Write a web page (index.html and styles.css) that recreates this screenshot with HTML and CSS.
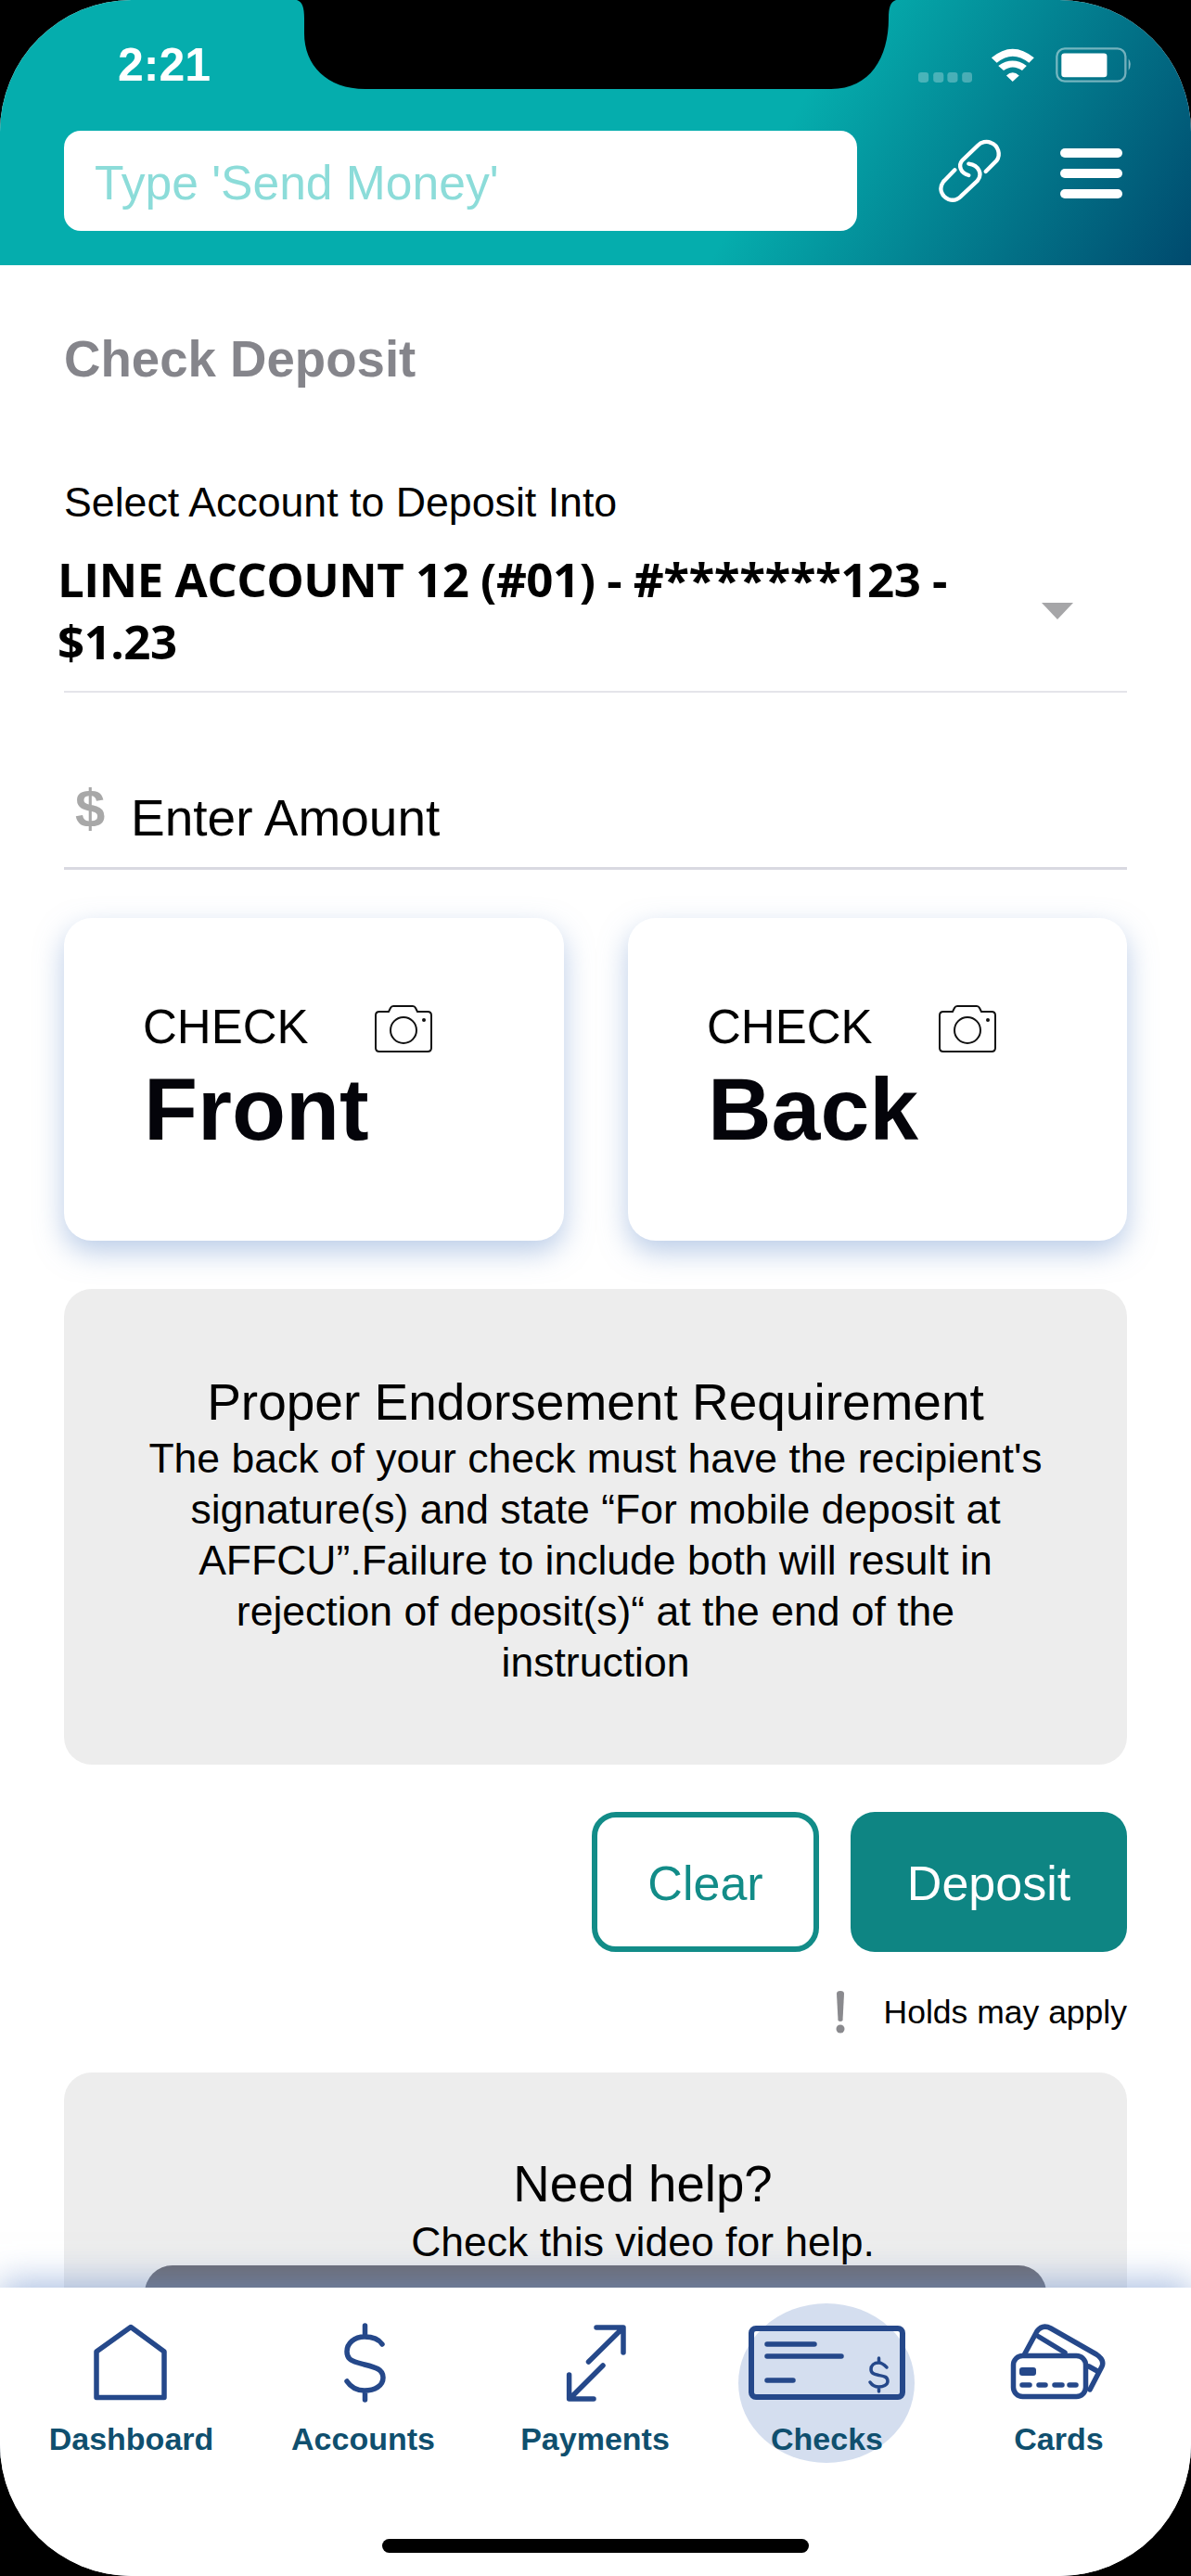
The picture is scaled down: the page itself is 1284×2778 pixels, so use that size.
FILE: index.html
```html
<!DOCTYPE html>
<html lang="en">
<head>
<meta charset="utf-8">
<title>Check Deposit</title>
<link rel="stylesheet" href="styles.css">
</head>
<body>
<div class="screen">
  <svg class="notch" viewBox="0 0 646 96"><path d="M0 0C6 2 8 8 8 20V36C8 70 32 96 74 96H576C618 96 638 62 638 20C638 8 640 2 646 0Z"/></svg>
  <header class="header">
    <div class="status">
      <span class="time">2:21</span>
      <div class="status-icons">
        <svg class="signal" viewBox="27 113 172 32"><g fill="#fff" fill-opacity=".28"><rect x="27" y="113" width="33" height="32" rx="9"/><rect x="75" y="113" width="33" height="32" rx="9"/><rect x="120" y="113" width="33" height="32" rx="9"/><rect x="167" y="113" width="32" height="32" rx="9"/></g></svg>
        <svg class="wifi" viewBox="262 33 144 112"><g fill="#fff"><path d="M262 65Q333 5 405 65L388 82Q333 38 280 82Z"/><path d="M285 92Q333 58 380 92L365 108Q333 85 303 108Z"/><path d="M312 125Q333 105 355 125L333 145Z"/></g></svg>
        <svg class="battery" viewBox="466 33 250 114"><rect x="470" y="37" width="223" height="106" rx="26" fill="none" stroke="#fff" stroke-opacity=".45" stroke-width="7"/><rect x="485" y="52" width="148" height="78" rx="10" fill="#fff"/><path d="M703 70Q716 88 703 108Z" fill="#fff" fill-opacity=".5"/></svg>
      </div>
    </div>
    <div class="search-row">
      <div class="search">Type 'Send Money'</div>
      <svg class="link" viewBox="90 330 210 204"><g fill="none" stroke="#fff" stroke-width="13" stroke-linecap="round"><path d="M245 435L280 400C295 380 285 350 262 342C248 335 230 340 220 350L170 398C155 415 163 440 190 447"/><path d="M145 430L108 468C92 490 102 515 125 525C140 530 155 525 165 515L218 465C235 445 225 415 190 410"/></g></svg>
      <div class="menu"><span></span><span></span><span></span></div>
    </div>
  </header>

  <main class="main">
    <h1 class="title">Check Deposit</h1>
    <div class="select-label">Select Account to Deposit Into</div>
    <div class="select">
      <div class="select-value">LINE ACCOUNT 12 (#01) - #*******123 - $1.23</div>
      <div class="select-arrow"></div>
    </div>
    <div class="amount">
      <span class="amount-sign">$</span>
      <span class="amount-text">Enter Amount</span>
    </div>
    <div class="capture-row">
      <div class="capture">
        <div class="capture-top">
          <span class="capture-label">CHECK</span>
          <svg class="camera" viewBox="0 0 62 52"><g fill="none" stroke="#111" stroke-width="2"><path d="M5 8H15L17 4Q18 2 20 2H41Q43 2 44 4L46 8H57Q61 8 61 12V47Q61 51 57 51H5Q1 51 1 47V12Q1 8 5 8Z"/><circle cx="31" cy="28" r="14"/></g><circle cx="53" cy="17" r="2" fill="#111"/></svg>
        </div>
        <div class="capture-name">Front</div>
      </div>
      <div class="capture">
        <div class="capture-top">
          <span class="capture-label">CHECK</span>
          <svg class="camera" viewBox="0 0 62 52"><g fill="none" stroke="#111" stroke-width="2"><path d="M5 8H15L17 4Q18 2 20 2H41Q43 2 44 4L46 8H57Q61 8 61 12V47Q61 51 57 51H5Q1 51 1 47V12Q1 8 5 8Z"/><circle cx="31" cy="28" r="14"/></g><circle cx="53" cy="17" r="2" fill="#111"/></svg>
        </div>
        <div class="capture-name">Back</div>
      </div>
    </div>
    <section class="notice">
      <h2 class="notice-title">Proper Endorsement Requirement</h2>
      <p class="notice-body">The back of your check must have the recipient's<br>signature(s) and state “For mobile deposit at<br>AFFCU”.Failure to include both will result in<br>rejection of deposit(s)“ at the end of the<br>instruction</p>
    </section>
    <div class="actions">
      <button class="btn btn-clear">Clear</button>
      <button class="btn btn-deposit">Deposit</button>
    </div>
    <div class="holds">
      <svg class="bang" viewBox="0 0 10 46"><path d="M1 3Q1 0 5 0Q9 0 9 3L7.5 32Q5 34 2.500 32Z" fill="#8a8a8e"/><circle cx="5" cy="41" r="4.500" fill="#8a8a8e"/></svg>
      <span>Holds may apply</span>
    </div>
    <section class="help">
      <h2 class="help-title">Need help?</h2>
      <p class="help-body">Check this video for help.</p>
      <div class="help-video"></div>
    </section>
  </main>

  <nav class="tabbar">
    <div class="tab">
      <svg class="tab-icon" viewBox="0 0 180 100"><path d="M53 85.500V36L90 9.500L126 36V85.500Z"/></svg>
      <span class="tab-label">Dashboard</span>
    </div>
    <div class="tab">
      <svg class="tab-icon" viewBox="0 0 180 100"><path d="M92.500 8V19M92.500 79V88M111 28C107 22 100 20 92 20C81 20 73 27 73 36C73 46 81 47 92 50C104 53 112 55 112 64C112 73 103 78 92 78C84 78 77 74 73 68"/></svg>
      <span class="tab-label">Accounts</span>
    </div>
    <div class="tab">
      <svg class="tab-icon" viewBox="0 0 180 100"><path d="M92 10H121V37M83.500 47L120 11M99 51L64 86M62.600 61V87H89"/></svg>
      <span class="tab-label">Payments</span>
    </div>
    <div class="tab tab-active">
      <span class="tab-glow"></span>
      <svg class="tab-icon" viewBox="0 0 180 100"><rect x="9" y="11" width="163" height="74" rx="5" stroke-width="6"/><path d="M26 28H77M26 41H106M26 67H54" stroke-width="5.500"/><path d="M146.500 43V48M146.500 74V79M155 53C152 50 150 48 146.500 48C141 48 138 51 138 55C138 60 142 60.500 146.500 61.500C152 62.500 156 63 156 68C156 72 151 74 146.500 74C142 74 139 72 137 69" stroke-width="3.500"/></svg>
      <span class="tab-label">Checks</span>
    </div>
    <div class="tab">
      <svg class="tab-icon" viewBox="1 0 180 100"><path d="M55 38L68 14Q74 6 83 11L132 39Q141 45 138 52L125 77M70 20L98 37" /><path d="M124 52L133 57" /><rect class="card-front" x="42.500" y="40.500" width="78" height="44" rx="10"/><rect class="card-chip" x="49" y="53" width="18" height="9" rx="3"/><path d="M52 72H60M70 72H77M87 72H95M103 72H110"/></svg>
      <span class="tab-label">Cards</span>
    </div>
    <div class="home-indicator"></div>
  </nav>
</div>
</body>
</html>
```

FILE: styles.css
```css
* { box-sizing: border-box; }
html, body { margin: 0; padding: 0; background: #000; }
body { font-family: "Liberation Sans", Arial, sans-serif; color: #000; }

.screen {
  position: relative;
  width: 1284px;
  height: 2778px;
  display: flex;
  flex-direction: column;
  overflow: hidden;
  background: #fff;
  border-radius: 142px;
}

.notch { position: absolute; left: 320px; top: 0; width: 646px; height: 96px; z-index: 5; fill: #000; }

.header {
  flex: none;
  height: 286px;
  background: linear-gradient(120deg, #05adad 0%, #05adad 64%, #004a6e 100%);
}
.status {
  height: 141px;
  display: flex;
  justify-content: space-between;
  align-items: flex-start;
  padding: 42px 73px 0 127px;
}
.time { font-size: 50px; font-weight: 700; line-height: 56px; color: #fff; }
.status-icons { display: flex; align-items: flex-start; padding-top: 10px; }
.signal { width: 58px; height: 11px; margin: 26px 20px 0 0; }
.wifi { width: 48px; height: 36px; margin-right: 22px; }
.battery { width: 83px; height: 38px; margin-top: -1px; margin-right: -10px; }

.search-row { display: flex; align-items: flex-start; padding-left: 69px; }
.search {
  width: 855px;
  height: 108px;
  padding-left: 33px;
  background: #fff;
  border-radius: 18px;
  font-size: 51.600px;
  line-height: 113px;
  color: #8cdcd9;
}
.link { width: 70px; height: 68px; margin: 9px 0 0 87px; flex: none; }
.menu { display: flex; flex-direction: column; gap: 12px; width: 67px; margin: 19px 0 0 62px; flex: none; }
.menu span { height: 10px; background: #fff; border-radius: 5px; }

.main { flex: 1; min-height: 0; overflow: hidden; padding: 72px 69px 0; }

.title { margin: 0; font-size: 54.600px; line-height: 60px; font-weight: 700; color: #85858b; }
.select-label { margin-top: 99px; font-size: 44.700px; line-height: 50px; }

.select { margin-top: 24px; padding-bottom: 20px; display: flex; align-items: center; border-bottom: 2px solid #e4e4ea; }
.select-value {
  flex: 1;
  margin-left: -7px;
  font-family: "Open Sans", sans-serif;
  font-weight: 700;
  font-size: 51px;
  letter-spacing: -.5px;
  line-height: 67px;
  padding-right: 40px;
}
.select-arrow {
  flex: none;
  width: 0;
  height: 0;
  margin-right: 58px;
  margin-top: 2px;
  border-left: 17px solid transparent;
  border-right: 17px solid transparent;
  border-top: 18px solid #a6a6a8;
}

.amount { margin-top: 105px; padding: 0 0 23px 12px; display: flex; align-items: flex-start; border-bottom: 3px solid #d9d9e1; }
.amount-sign { font-size: 58px; line-height: 60px; font-weight: 700; color: #a8a8a8; margin-top: -10px; width: 60px; }
.amount-text { font-size: 55px; line-height: 60px; }

.capture-row { margin-top: 52px; display: grid; grid-template-columns: 539px 538px; column-gap: 69px; }
.capture {
  height: 348px;
  padding: 88px 0 0 85px;
  background: #fff;
  border-radius: 30px;
  box-shadow: 0 12px 30px rgba(120, 155, 210, .5);
}
.capture-top { display: flex; align-items: center; gap: 71px; height: 60px; }
.capture-label { font-size: 51px; line-height: 60px; }
.camera { width: 62px; height: 52px; margin-top: 2px; }
.capture-name { margin: 8px 0 0 1px; font-size: 95px; line-height: 100px; font-weight: 700; color: #04040a; }

.notice { margin-top: 52px; height: 513px; padding-top: 91px; background: #ededed; border-radius: 30px; text-align: center; }
.notice-title { margin: 0; font-size: 55px; line-height: 62px; font-weight: 400; }
.notice-body { margin: 2px 0 0; font-size: 44.500px; line-height: 55px; }

.actions { margin-top: 51px; display: flex; justify-content: flex-end; gap: 34px; }
.btn {
  height: 151px;
  border-radius: 26px;
  font-family: inherit;
  font-size: 52px;
  padding: 2px 0 0;
}
.btn-clear { width: 245px; background: #fff; border: 6px solid #128c88; color: #128c88; }
.btn-deposit { width: 298px; background: #0e8583; border: 0; color: #fff; }

.holds { margin-top: 40px; height: 50px; display: flex; justify-content: flex-end; align-items: center; gap: 42px; font-size: 35.500px; }
.bang { width: 10px; height: 46px; }

.help { margin-top: 40px; padding: 91px 0 0; height: 500px; background: #ededed; border-radius: 30px; text-align: center; }
.help-title, .help-body { padding-left: 102px; }
.help-title { margin: 0; font-size: 54.600px; line-height: 60px; font-weight: 400; }
.help-body { margin: 6px 0 0; font-size: 44.500px; line-height: 52px; }
.help-video { height: 200px; margin: -1px 87px 0; background: #6c6c74; border-radius: 30px; }

.tabbar {
  position: relative;
  flex: none;
  height: 311px;
  padding: 0 16px;
  display: grid;
  grid-template-columns: repeat(5, 250px);
  align-items: start;
  background: #fff;
  box-shadow: 0 -6px 36px rgba(110, 145, 205, .6);
}
.tab { position: relative; display: flex; flex-direction: column; align-items: center; padding-top: 33px; }
.tab-icon {
  position: relative;
  width: 180px;
  height: 100px;
  fill: none;
  stroke: #25488a;
  stroke-width: 5.500;
  stroke-linecap: round;
  stroke-linejoin: round;
}
.card-front { fill: #fff; }
.card-chip { fill: #25488a; stroke: none; }
.tab-label { position: relative; margin: 10px 0 0 1px; font-size: 34px; line-height: 40px; font-weight: 700; color: #0f4f6e; }
.tab-glow { position: absolute; top: 17px; left: 30px; width: 190px; height: 172px; border-radius: 50%; background: #d4deef; }
.home-indicator { position: absolute; left: 412px; top: 271px; width: 460px; height: 15px; background: #000; border-radius: 8px; }
```
